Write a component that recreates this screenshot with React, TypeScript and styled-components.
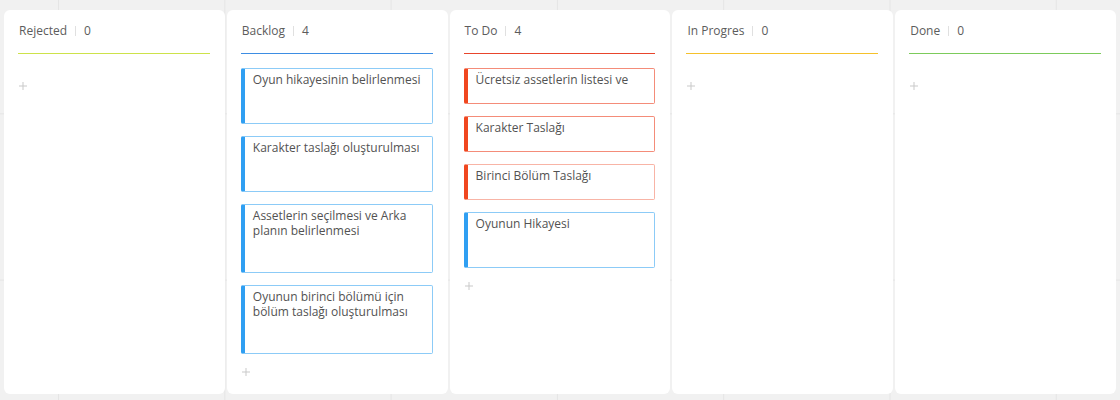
import React from "react";
import styled, { createGlobalStyle } from "styled-components";

const GlobalStyle = createGlobalStyle`
  html, body {
    margin: 0;
    padding: 0;
  }
  body {
    width: 1120px;
    height: 400px;
    overflow: hidden;
    background-color: #f1f1f1;
    background-image:
      linear-gradient(to right, #e5e5e5 1px, transparent 1px),
      linear-gradient(to bottom, #e5e5e5 1px, transparent 1px);
    background-size: 166.3px 166.3px;
    background-position: 58px -53px;
    font-family: "Open Sans", "Noto Sans", sans-serif;
  }
`;

const Board = styled.div`
  display: flex;
  gap: 2px;
  padding: 10px 4px 6px;
  box-sizing: border-box;
  height: 400px;
`;

const Column = styled.section`
  flex: 1 1 0;
  min-width: 0;
  background: #ffffff;
  border-radius: 6px;
  padding: 0 15px 0 14px;
  box-sizing: border-box;
  display: flex;
  flex-direction: column;
`;

const Header = styled.header`
  display: flex;
  align-items: center;
  padding: 13px 0 14px 1px;
  font-size: 12px;
  line-height: 16px;
  color: #5c5c5c;
`;

const Underline = styled.div<{ $color: string }>`
  height: 1px;
  background-color: ${(p) => p.$color};
`;

const Title = styled.span`
  white-space: nowrap;
`;

const Divider = styled.span`
  width: 1px;
  height: 10px;
  background: #e0e0e0;
  margin: 0 8px 0 8px;
`;

const Count = styled.span`
  color: #5c5c5c;
`;

const List = styled.div`
  display: flex;
  flex-direction: column;
  gap: 12px;
  padding-top: 14px;
`;

const palette = {
  blue: { bar: "#2f9ff2", border: "#8ccbf7", pad: 34, min: 56 },
  red: { bar: "#f0471f", border: "#f48c79", pad: 16, min: 0 },
  redLight: { bar: "#f0471f", border: "#f8b4a6", pad: 16, min: 0 },
};

type Tone = keyof typeof palette;

const Card = styled.div<{ $tone: Tone }>`
  box-sizing: border-box;
  border: 1px solid ${(p) => palette[p.$tone].border};
  border-left: 4px solid ${(p) => palette[p.$tone].bar};
  border-radius: 2px;
  padding: 3px 8px ${(p) => palette[p.$tone].pad}px 8px;
  min-height: ${(p) => palette[p.$tone].min}px;
  background: #ffffff;
`;

const CardText = styled.div`
  font-size: 12px;
  line-height: 15px;
  color: #525252;
`;

const AddButton = styled.div`
  margin-top: 14px;
  padding-left: 1px;
  height: 8px;
  display: flex;
  align-items: center;
`;

const PlusIcon = () => (
  <svg width="8" height="8" viewBox="0 0 8 8">
    <path d="M4 0 V8 M0 4 H8" stroke="#c9c9c9" strokeWidth="1" />
  </svg>
);

type CardData = { text: string; tone: Tone };
type ColumnData = { title: string; line: string; cards: CardData[] };

const columns: ColumnData[] = [
  { title: "Rejected", line: "#cde24a", cards: [] },
  {
    title: "Backlog",
    line: "#3d8de3",
    cards: [
      { text: "Oyun hikayesinin belirlenmesi", tone: "blue" },
      { text: "Karakter taslağı oluşturulması", tone: "blue" },
      { text: "Assetlerin seçilmesi ve Arka planın belirlenmesi", tone: "blue" },
      { text: "Oyunun birinci bölümü için bölüm taslağı oluşturulması", tone: "blue" },
    ],
  },
  {
    title: "To Do",
    line: "#e8452c",
    cards: [
      { text: "Ücretsiz assetlerin listesi ve", tone: "red" },
      { text: "Karakter Taslağı", tone: "red" },
      { text: "Birinci Bölüm Taslağı", tone: "redLight" },
      { text: "Oyunun Hikayesi", tone: "blue" },
    ],
  },
  { title: "In Progres", line: "#f5c12b", cards: [] },
  { title: "Done", line: "#7ccb5b", cards: [] },
];

export default function App() {
  return (
    <>
      <GlobalStyle />
      <Board>
        {columns.map((col) => (
          <Column key={col.title}>
            <Header>
              <Title>{col.title}</Title>
              <Divider />
              <Count>{col.cards.length}</Count>
            </Header>
            <Underline $color={col.line} />
            <List>
              {col.cards.map((c) => (
                <Card key={c.text} $tone={c.tone}>
                  <CardText>{c.text}</CardText>
                </Card>
              ))}
            </List>
            <AddButton>
              <PlusIcon />
            </AddButton>
          </Column>
        ))}
      </Board>
    </>
  );
}
